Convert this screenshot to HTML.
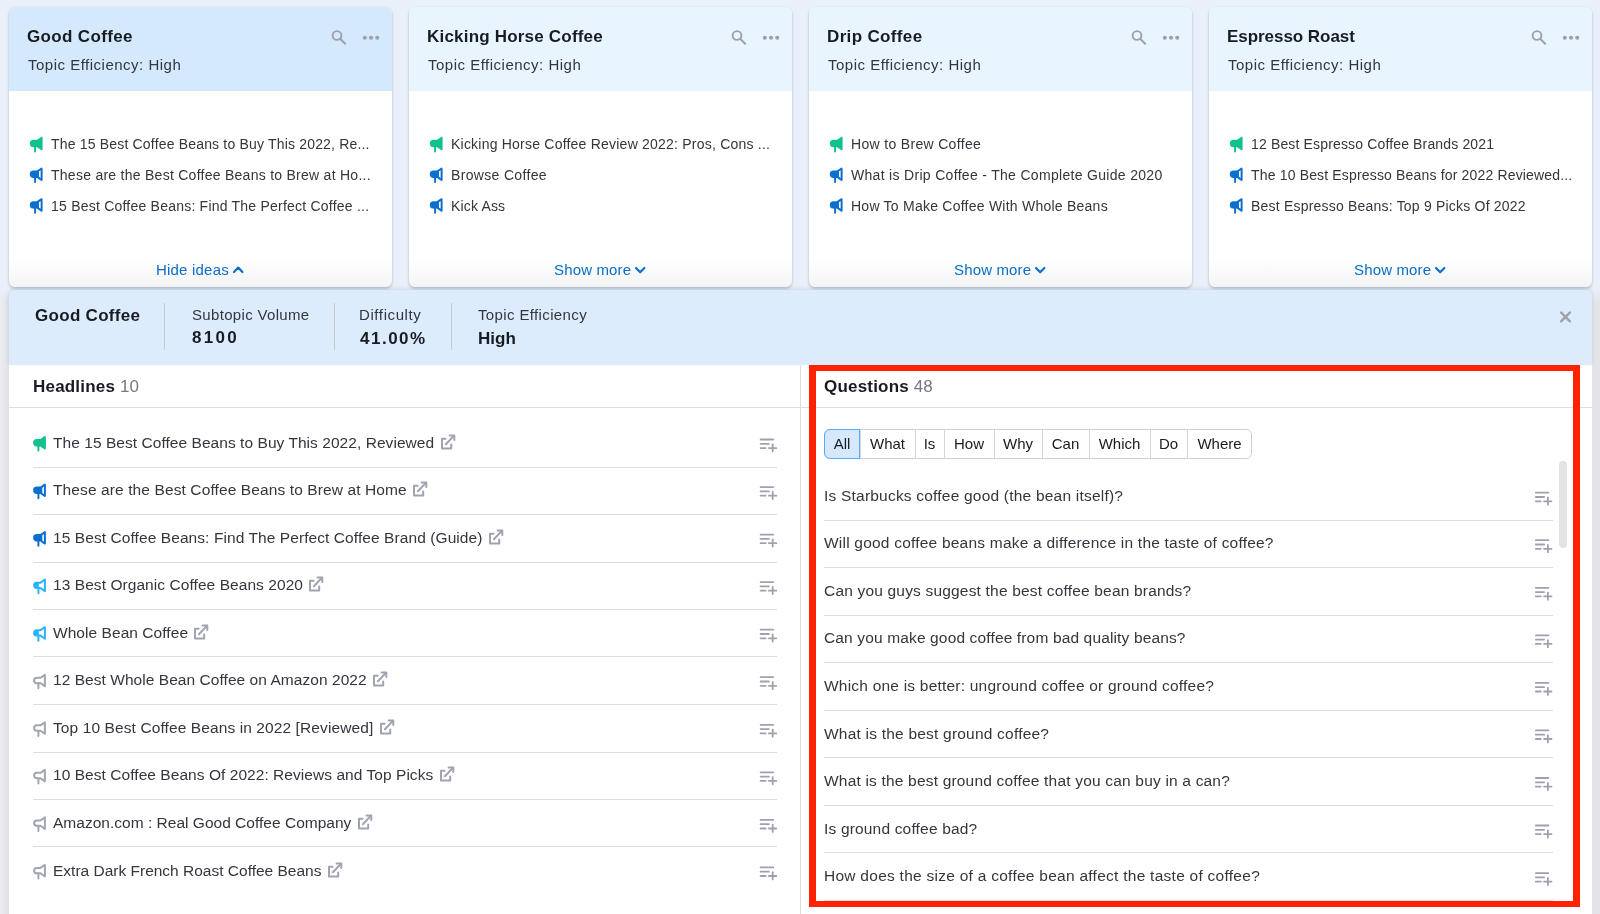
<!DOCTYPE html><html><head><meta charset="utf-8"><style>
html,body{margin:0;padding:0;}
body{width:1600px;height:914px;overflow:hidden;position:relative;background:linear-gradient(to right,#eceef2 0,#dfe1e6 9px,#e3e4e8 9px);font-family:'Liberation Sans', sans-serif;}
.t{position:absolute;white-space:nowrap;will-change:transform;}
.ic{position:absolute;overflow:visible;}
.abs{position:absolute;}
</style></head><body>
<div class="abs" style="left:0;top:0;width:1600px;height:302px;background:linear-gradient(#e9f0f9 0,#e9f0f9 289px,rgba(233,240,249,0) 302px)"></div>
<div class="abs" style="left:9.4px;top:7px;width:383px;height:280px;border-radius:6px;overflow:hidden;box-shadow:0 0 1px rgba(20,50,90,0.25),0 2px 3px rgba(20,50,90,0.22);background:linear-gradient(#fff 0,#fff 252px,#f4f4f4 280px)"><div style="height:83.6px;background:#d5e9fd"></div></div>
<div class="t" style="left:27.00px;top:27.51px;font-size:17px;line-height:17px;color:#191b23;font-weight:700;letter-spacing:0.35px;">Good Coffee</div>
<div class="t" style="left:27.80px;top:56.80px;font-size:15px;line-height:15px;color:#34363e;font-weight:400;letter-spacing:0.5px;">Topic Efficiency: High</div>
<svg class="ic" style="left:327px;top:25px" width="50" height="25" viewBox="0 0 50 25"><circle cx="10" cy="10.5" r="4.4" fill="none" stroke="#a09fab" stroke-width="1.9"/><path d="M13.2 13.8 L18.2 18.8" stroke="#a09fab" stroke-width="2" stroke-linecap="round"/><circle cx="37.85" cy="12.75" r="2.05" fill="#a09fab"/><circle cx="44" cy="12.75" r="2.05" fill="#a09fab"/><circle cx="50.25" cy="12.75" r="2.05" fill="#a09fab"/></svg>
<svg class="ic" style="left:24px;top:130px" width="24" height="24"><g transform="translate(0.70,0.60)"><path d="M12.5 10.2 L16.9 7.2 V18.7 L12.5 15.6 H8.8 A2.7 2.7 0 0 1 8.8 10.2 Z" fill="#13c08f" stroke="#13c08f" stroke-width="2" stroke-linejoin="round"/><path d="M10.4 15.8 V20.8" stroke="#13c08f" stroke-width="2" stroke-linecap="round"/></g></svg>
<div class="t" style="left:50.60px;top:137.45px;font-size:14px;line-height:14px;color:#34363e;font-weight:400;letter-spacing:0.181px;">The 15 Best Coffee Beans to Buy This 2022, Re...</div>
<svg class="ic" style="left:24px;top:161px" width="24" height="24"><g transform="translate(0.70,0.30)"><path d="M8.8 10.2 H12.5 L14.3 9 V16.9 L12.5 15.6 H8.8 A2.7 2.7 0 0 1 8.8 10.2Z" fill="#0b6fd0"/><path d="M12.5 10.2 L16.9 7.2 V18.7 L12.5 15.6 H8.8 A2.7 2.7 0 0 1 8.8 10.2 Z" fill="none" stroke="#0b6fd0" stroke-width="2" stroke-linejoin="round"/><path d="M10.4 15.8 V20.8" stroke="#0b6fd0" stroke-width="2" stroke-linecap="round"/></g></svg>
<div class="t" style="left:50.60px;top:168.15px;font-size:14px;line-height:14px;color:#34363e;font-weight:400;letter-spacing:0.265px;">These are the Best Coffee Beans to Brew at Ho...</div>
<svg class="ic" style="left:24px;top:192px" width="24" height="24"><g transform="translate(0.70,0.00)"><path d="M8.8 10.2 H12.5 L14.3 9 V16.9 L12.5 15.6 H8.8 A2.7 2.7 0 0 1 8.8 10.2Z" fill="#0b6fd0"/><path d="M12.5 10.2 L16.9 7.2 V18.7 L12.5 15.6 H8.8 A2.7 2.7 0 0 1 8.8 10.2 Z" fill="none" stroke="#0b6fd0" stroke-width="2" stroke-linejoin="round"/><path d="M10.4 15.8 V20.8" stroke="#0b6fd0" stroke-width="2" stroke-linecap="round"/></g></svg>
<div class="t" style="left:50.60px;top:198.85px;font-size:14px;line-height:14px;color:#34363e;font-weight:400;letter-spacing:0.222px;">15 Best Coffee Beans: Find The Perfect Coffee ...</div>
<div class="t" style="left:156.10px;top:262.05px;font-size:15px;line-height:15px;color:#0a6dca;font-weight:400;letter-spacing:0.2px;">Hide ideas</div>
<svg class="ic" style="left:231px;top:262px" width="14" height="14" viewBox="0 0 14 14"><path d="M3 10 L7.2 5.6 L11.4 10" fill="none" stroke="#0a6dca" stroke-width="2.2" stroke-linecap="round" stroke-linejoin="round"/></svg>
<div class="abs" style="left:409px;top:7px;width:383px;height:280px;border-radius:6px;overflow:hidden;box-shadow:0 0 1px rgba(20,50,90,0.25),0 2px 3px rgba(20,50,90,0.22);background:linear-gradient(#fff 0,#fff 252px,#f4f4f4 280px)"><div style="height:83.6px;background:#e8f5ff"></div></div>
<div class="t" style="left:427.00px;top:27.51px;font-size:17px;line-height:17px;color:#191b23;font-weight:700;letter-spacing:0.2px;">Kicking Horse Coffee</div>
<div class="t" style="left:427.80px;top:56.80px;font-size:15px;line-height:15px;color:#34363e;font-weight:400;letter-spacing:0.5px;">Topic Efficiency: High</div>
<svg class="ic" style="left:727px;top:25px" width="50" height="25" viewBox="0 0 50 25"><circle cx="10" cy="10.5" r="4.4" fill="none" stroke="#a09fab" stroke-width="1.9"/><path d="M13.2 13.8 L18.2 18.8" stroke="#a09fab" stroke-width="2" stroke-linecap="round"/><circle cx="37.85" cy="12.75" r="2.05" fill="#a09fab"/><circle cx="44" cy="12.75" r="2.05" fill="#a09fab"/><circle cx="50.25" cy="12.75" r="2.05" fill="#a09fab"/></svg>
<svg class="ic" style="left:424px;top:130px" width="24" height="24"><g transform="translate(0.70,0.60)"><path d="M12.5 10.2 L16.9 7.2 V18.7 L12.5 15.6 H8.8 A2.7 2.7 0 0 1 8.8 10.2 Z" fill="#13c08f" stroke="#13c08f" stroke-width="2" stroke-linejoin="round"/><path d="M10.4 15.8 V20.8" stroke="#13c08f" stroke-width="2" stroke-linecap="round"/></g></svg>
<div class="t" style="left:450.60px;top:137.45px;font-size:14px;line-height:14px;color:#34363e;font-weight:400;letter-spacing:0.219px;">Kicking Horse Coffee Review 2022: Pros, Cons ...</div>
<svg class="ic" style="left:424px;top:161px" width="24" height="24"><g transform="translate(0.70,0.30)"><path d="M8.8 10.2 H12.5 L14.3 9 V16.9 L12.5 15.6 H8.8 A2.7 2.7 0 0 1 8.8 10.2Z" fill="#0b6fd0"/><path d="M12.5 10.2 L16.9 7.2 V18.7 L12.5 15.6 H8.8 A2.7 2.7 0 0 1 8.8 10.2 Z" fill="none" stroke="#0b6fd0" stroke-width="2" stroke-linejoin="round"/><path d="M10.4 15.8 V20.8" stroke="#0b6fd0" stroke-width="2" stroke-linecap="round"/></g></svg>
<div class="t" style="left:450.60px;top:168.15px;font-size:14px;line-height:14px;color:#34363e;font-weight:400;letter-spacing:0.331px;">Browse Coffee</div>
<svg class="ic" style="left:424px;top:192px" width="24" height="24"><g transform="translate(0.70,0.00)"><path d="M8.8 10.2 H12.5 L14.3 9 V16.9 L12.5 15.6 H8.8 A2.7 2.7 0 0 1 8.8 10.2Z" fill="#0b6fd0"/><path d="M12.5 10.2 L16.9 7.2 V18.7 L12.5 15.6 H8.8 A2.7 2.7 0 0 1 8.8 10.2 Z" fill="none" stroke="#0b6fd0" stroke-width="2" stroke-linejoin="round"/><path d="M10.4 15.8 V20.8" stroke="#0b6fd0" stroke-width="2" stroke-linecap="round"/></g></svg>
<div class="t" style="left:450.60px;top:198.85px;font-size:14px;line-height:14px;color:#34363e;font-weight:400;letter-spacing:0.163px;">Kick Ass</div>
<div class="t" style="left:553.60px;top:262.30px;font-size:15px;line-height:15px;color:#0a6dca;font-weight:400;letter-spacing:0.15px;">Show more</div>
<svg class="ic" style="left:633px;top:262px" width="14" height="14" viewBox="0 0 14 14"><path d="M3 6 L7.2 10.2 L11.4 6" fill="none" stroke="#0a6dca" stroke-width="2.2" stroke-linecap="round" stroke-linejoin="round"/></svg>
<div class="abs" style="left:808.8px;top:7px;width:383px;height:280px;border-radius:6px;overflow:hidden;box-shadow:0 0 1px rgba(20,50,90,0.25),0 2px 3px rgba(20,50,90,0.22);background:linear-gradient(#fff 0,#fff 252px,#f4f4f4 280px)"><div style="height:83.6px;background:#e8f5ff"></div></div>
<div class="t" style="left:827.00px;top:27.51px;font-size:17px;line-height:17px;color:#191b23;font-weight:700;letter-spacing:0.35px;">Drip Coffee</div>
<div class="t" style="left:827.80px;top:56.80px;font-size:15px;line-height:15px;color:#34363e;font-weight:400;letter-spacing:0.5px;">Topic Efficiency: High</div>
<svg class="ic" style="left:1127px;top:25px" width="50" height="25" viewBox="0 0 50 25"><circle cx="10" cy="10.5" r="4.4" fill="none" stroke="#a09fab" stroke-width="1.9"/><path d="M13.2 13.8 L18.2 18.8" stroke="#a09fab" stroke-width="2" stroke-linecap="round"/><circle cx="37.85" cy="12.75" r="2.05" fill="#a09fab"/><circle cx="44" cy="12.75" r="2.05" fill="#a09fab"/><circle cx="50.25" cy="12.75" r="2.05" fill="#a09fab"/></svg>
<svg class="ic" style="left:824px;top:130px" width="24" height="24"><g transform="translate(0.70,0.60)"><path d="M12.5 10.2 L16.9 7.2 V18.7 L12.5 15.6 H8.8 A2.7 2.7 0 0 1 8.8 10.2 Z" fill="#13c08f" stroke="#13c08f" stroke-width="2" stroke-linejoin="round"/><path d="M10.4 15.8 V20.8" stroke="#13c08f" stroke-width="2" stroke-linecap="round"/></g></svg>
<div class="t" style="left:850.60px;top:137.45px;font-size:14px;line-height:14px;color:#34363e;font-weight:400;letter-spacing:0.328px;">How to Brew Coffee</div>
<svg class="ic" style="left:824px;top:161px" width="24" height="24"><g transform="translate(0.70,0.30)"><path d="M8.8 10.2 H12.5 L14.3 9 V16.9 L12.5 15.6 H8.8 A2.7 2.7 0 0 1 8.8 10.2Z" fill="#0b6fd0"/><path d="M12.5 10.2 L16.9 7.2 V18.7 L12.5 15.6 H8.8 A2.7 2.7 0 0 1 8.8 10.2 Z" fill="none" stroke="#0b6fd0" stroke-width="2" stroke-linejoin="round"/><path d="M10.4 15.8 V20.8" stroke="#0b6fd0" stroke-width="2" stroke-linecap="round"/></g></svg>
<div class="t" style="left:850.60px;top:168.15px;font-size:14px;line-height:14px;color:#34363e;font-weight:400;letter-spacing:0.311px;">What is Drip Coffee - The Complete Guide 2020</div>
<svg class="ic" style="left:824px;top:192px" width="24" height="24"><g transform="translate(0.70,0.00)"><path d="M8.8 10.2 H12.5 L14.3 9 V16.9 L12.5 15.6 H8.8 A2.7 2.7 0 0 1 8.8 10.2Z" fill="#0b6fd0"/><path d="M12.5 10.2 L16.9 7.2 V18.7 L12.5 15.6 H8.8 A2.7 2.7 0 0 1 8.8 10.2 Z" fill="none" stroke="#0b6fd0" stroke-width="2" stroke-linejoin="round"/><path d="M10.4 15.8 V20.8" stroke="#0b6fd0" stroke-width="2" stroke-linecap="round"/></g></svg>
<div class="t" style="left:850.60px;top:198.85px;font-size:14px;line-height:14px;color:#34363e;font-weight:400;letter-spacing:0.24px;">How To Make Coffee With Whole Beans</div>
<div class="t" style="left:953.60px;top:262.30px;font-size:15px;line-height:15px;color:#0a6dca;font-weight:400;letter-spacing:0.15px;">Show more</div>
<svg class="ic" style="left:1033px;top:262px" width="14" height="14" viewBox="0 0 14 14"><path d="M3 6 L7.2 10.2 L11.4 6" fill="none" stroke="#0a6dca" stroke-width="2.2" stroke-linecap="round" stroke-linejoin="round"/></svg>
<div class="abs" style="left:1208.7px;top:7px;width:383px;height:280px;border-radius:6px;overflow:hidden;box-shadow:0 0 1px rgba(20,50,90,0.25),0 2px 3px rgba(20,50,90,0.22);background:linear-gradient(#fff 0,#fff 252px,#f4f4f4 280px)"><div style="height:83.6px;background:#e8f5ff"></div></div>
<div class="t" style="left:1227.00px;top:27.51px;font-size:17px;line-height:17px;color:#191b23;font-weight:700;letter-spacing:-0.05px;">Espresso Roast</div>
<div class="t" style="left:1227.80px;top:56.80px;font-size:15px;line-height:15px;color:#34363e;font-weight:400;letter-spacing:0.5px;">Topic Efficiency: High</div>
<svg class="ic" style="left:1527px;top:25px" width="50" height="25" viewBox="0 0 50 25"><circle cx="10" cy="10.5" r="4.4" fill="none" stroke="#a09fab" stroke-width="1.9"/><path d="M13.2 13.8 L18.2 18.8" stroke="#a09fab" stroke-width="2" stroke-linecap="round"/><circle cx="37.85" cy="12.75" r="2.05" fill="#a09fab"/><circle cx="44" cy="12.75" r="2.05" fill="#a09fab"/><circle cx="50.25" cy="12.75" r="2.05" fill="#a09fab"/></svg>
<svg class="ic" style="left:1224px;top:130px" width="24" height="24"><g transform="translate(0.70,0.60)"><path d="M12.5 10.2 L16.9 7.2 V18.7 L12.5 15.6 H8.8 A2.7 2.7 0 0 1 8.8 10.2 Z" fill="#13c08f" stroke="#13c08f" stroke-width="2" stroke-linejoin="round"/><path d="M10.4 15.8 V20.8" stroke="#13c08f" stroke-width="2" stroke-linecap="round"/></g></svg>
<div class="t" style="left:1250.60px;top:137.45px;font-size:14px;line-height:14px;color:#34363e;font-weight:400;letter-spacing:0.151px;">12 Best Espresso Coffee Brands 2021</div>
<svg class="ic" style="left:1224px;top:161px" width="24" height="24"><g transform="translate(0.70,0.30)"><path d="M8.8 10.2 H12.5 L14.3 9 V16.9 L12.5 15.6 H8.8 A2.7 2.7 0 0 1 8.8 10.2Z" fill="#0b6fd0"/><path d="M12.5 10.2 L16.9 7.2 V18.7 L12.5 15.6 H8.8 A2.7 2.7 0 0 1 8.8 10.2 Z" fill="none" stroke="#0b6fd0" stroke-width="2" stroke-linejoin="round"/><path d="M10.4 15.8 V20.8" stroke="#0b6fd0" stroke-width="2" stroke-linecap="round"/></g></svg>
<div class="t" style="left:1250.60px;top:168.15px;font-size:14px;line-height:14px;color:#34363e;font-weight:400;letter-spacing:0.166px;">The 10 Best Espresso Beans for 2022 Reviewed...</div>
<svg class="ic" style="left:1224px;top:192px" width="24" height="24"><g transform="translate(0.70,0.00)"><path d="M8.8 10.2 H12.5 L14.3 9 V16.9 L12.5 15.6 H8.8 A2.7 2.7 0 0 1 8.8 10.2Z" fill="#0b6fd0"/><path d="M12.5 10.2 L16.9 7.2 V18.7 L12.5 15.6 H8.8 A2.7 2.7 0 0 1 8.8 10.2 Z" fill="none" stroke="#0b6fd0" stroke-width="2" stroke-linejoin="round"/><path d="M10.4 15.8 V20.8" stroke="#0b6fd0" stroke-width="2" stroke-linecap="round"/></g></svg>
<div class="t" style="left:1250.60px;top:198.85px;font-size:14px;line-height:14px;color:#34363e;font-weight:400;letter-spacing:0.203px;">Best Espresso Beans: Top 9 Picks Of 2022</div>
<div class="t" style="left:1353.60px;top:262.30px;font-size:15px;line-height:15px;color:#0a6dca;font-weight:400;letter-spacing:0.15px;">Show more</div>
<svg class="ic" style="left:1433px;top:262px" width="14" height="14" viewBox="0 0 14 14"><path d="M3 6 L7.2 10.2 L11.4 6" fill="none" stroke="#0a6dca" stroke-width="2.2" stroke-linecap="round" stroke-linejoin="round"/></svg>
<div class="abs" style="left:9px;top:290.4px;width:1583px;height:74.6px;background:#dcecfd;border-radius:6px 6px 0 0;box-shadow:0 -1px 4px rgba(20,40,80,0.12)"></div>
<div class="t" style="left:34.75px;top:307.11px;font-size:17px;line-height:17px;color:#191b23;font-weight:700;letter-spacing:0.3px;">Good Coffee</div>
<div class="abs" style="left:164px;top:303px;width:1px;height:47px;background:#c5c9d1"></div>
<div class="abs" style="left:334px;top:303px;width:1px;height:47px;background:#c5c9d1"></div>
<div class="abs" style="left:451px;top:303px;width:1px;height:47px;background:#c5c9d1"></div>
<div class="t" style="left:191.50px;top:307.10px;font-size:15px;line-height:15px;color:#34363e;font-weight:400;letter-spacing:0.33px;">Subtopic Volume</div>
<div class="t" style="left:191.50px;top:329.01px;font-size:17px;line-height:17px;color:#191b23;font-weight:700;letter-spacing:2.3px;">8100</div>
<div class="t" style="left:359.40px;top:307.30px;font-size:15px;line-height:15px;color:#34363e;font-weight:400;letter-spacing:0.6px;">Difficulty</div>
<div class="t" style="left:360.00px;top:329.61px;font-size:17px;line-height:17px;color:#191b23;font-weight:700;letter-spacing:1.5px;">41.00%</div>
<div class="t" style="left:478.00px;top:307.30px;font-size:15px;line-height:15px;color:#34363e;font-weight:400;letter-spacing:0.37px;">Topic Efficiency</div>
<div class="t" style="left:478.00px;top:329.61px;font-size:17px;line-height:17px;color:#191b23;font-weight:700;letter-spacing:0px;">High</div>
<svg class="ic" style="left:1558px;top:310px" width="15" height="15" viewBox="0 0 15 15"><path d="M3.1 2.5 L11.9 11.3 M11.9 2.5 L3.1 11.3" stroke="#a09fa8" stroke-width="2.4" stroke-linecap="round"/></svg>
<div class="abs" style="left:9px;top:365px;width:1583px;height:549px;background:#fff"></div>
<div class="abs" style="left:800px;top:365px;width:1px;height:549px;background:#dcdee4"></div>
<div class="abs" style="left:9px;top:407px;width:1583px;height:1px;background:#dcdee4"></div>
<div class="t" style="left:32.50px;top:378.36px;font-size:17px;line-height:17px;color:#191b23;font-weight:700;letter-spacing:0.2px;">Headlines <span style="font-weight:400;color:#757985;letter-spacing:0">10</span></div>
<div class="t" style="left:824.00px;top:378.36px;font-size:17px;line-height:17px;color:#191b23;font-weight:700;letter-spacing:0.2px;">Questions <span style="font-weight:400;color:#757985;letter-spacing:0">48</span></div>
<svg class="ic" style="left:28px;top:429px" width="24" height="24"><g transform="translate(0.00,0.80)"><path d="M12.5 10.2 L16.9 7.2 V18.7 L12.5 15.6 H8.8 A2.7 2.7 0 0 1 8.8 10.2 Z" fill="#13c08f" stroke="#13c08f" stroke-width="2" stroke-linejoin="round"/><path d="M10.4 15.8 V20.8" stroke="#13c08f" stroke-width="2" stroke-linecap="round"/></g></svg>
<div class="t" style="left:53.35px;top:434.58px;font-size:15.5px;line-height:15.5px;color:#34363e;font-weight:400;letter-spacing:0.051px;">The 15 Best Coffee Beans to Buy This 2022, Reviewed<svg style="position:absolute;top:-6.5px;margin-left:1.4px;overflow:visible" width="22" height="22" viewBox="0 0 22 22"><g stroke="#a0a3b0" stroke-width="2" fill="none" stroke-linecap="round" stroke-linejoin="round"><path d="M9.6 9.7 H6 V19.6 H15.2 V15.6"/><path d="M9.9 15.2 L17.8 6.9"/><path d="M13.6 6.4 H18.3 V11.1"/></g></svg></div>
<svg class="ic" style="left:758px;top:434px" width="19" height="18"><g stroke="#9fa2ae" stroke-width="1.8" stroke-linecap="round" transform="translate(0.70,0.50)"><path d="M1.9 5 H14.5"/><path d="M1.9 9.3 H10.2"/><path d="M1.9 13.6 H6.9"/><path d="M10.2 13.6 H17.6"/><path d="M14 9.8 V17"/></g></svg>
<div class="abs" style="left:33px;top:467px;width:744px;height:1px;background:#dcdee4"></div>
<svg class="ic" style="left:28px;top:477px" width="24" height="24"><g transform="translate(0.00,0.35)"><path d="M8.8 10.2 H12.5 L14.3 9 V16.9 L12.5 15.6 H8.8 A2.7 2.7 0 0 1 8.8 10.2Z" fill="#0b6fd0"/><path d="M12.5 10.2 L16.9 7.2 V18.7 L12.5 15.6 H8.8 A2.7 2.7 0 0 1 8.8 10.2 Z" fill="none" stroke="#0b6fd0" stroke-width="2" stroke-linejoin="round"/><path d="M10.4 15.8 V20.8" stroke="#0b6fd0" stroke-width="2" stroke-linecap="round"/></g></svg>
<div class="t" style="left:53.35px;top:482.13px;font-size:15.5px;line-height:15.5px;color:#34363e;font-weight:400;letter-spacing:0.11px;">These are the Best Coffee Beans to Brew at Home<svg style="position:absolute;top:-6.5px;margin-left:1.4px;overflow:visible" width="22" height="22" viewBox="0 0 22 22"><g stroke="#a0a3b0" stroke-width="2" fill="none" stroke-linecap="round" stroke-linejoin="round"><path d="M9.6 9.7 H6 V19.6 H15.2 V15.6"/><path d="M9.9 15.2 L17.8 6.9"/><path d="M13.6 6.4 H18.3 V11.1"/></g></svg></div>
<svg class="ic" style="left:758px;top:482px" width="19" height="18"><g stroke="#9fa2ae" stroke-width="1.8" stroke-linecap="round" transform="translate(0.70,0.10)"><path d="M1.9 5 H14.5"/><path d="M1.9 9.3 H10.2"/><path d="M1.9 13.6 H6.9"/><path d="M10.2 13.6 H17.6"/><path d="M14 9.8 V17"/></g></svg>
<div class="abs" style="left:33px;top:514px;width:744px;height:1px;background:#dcdee4"></div>
<svg class="ic" style="left:28px;top:524px" width="24" height="24"><g transform="translate(0.00,0.90)"><path d="M8.8 10.2 H12.5 L14.3 9 V16.9 L12.5 15.6 H8.8 A2.7 2.7 0 0 1 8.8 10.2Z" fill="#0b6fd0"/><path d="M12.5 10.2 L16.9 7.2 V18.7 L12.5 15.6 H8.8 A2.7 2.7 0 0 1 8.8 10.2 Z" fill="none" stroke="#0b6fd0" stroke-width="2" stroke-linejoin="round"/><path d="M10.4 15.8 V20.8" stroke="#0b6fd0" stroke-width="2" stroke-linecap="round"/></g></svg>
<div class="t" style="left:53.35px;top:529.68px;font-size:15.5px;line-height:15.5px;color:#34363e;font-weight:400;letter-spacing:0.08px;">15 Best Coffee Beans: Find The Perfect Coffee Brand (Guide)<svg style="position:absolute;top:-6.5px;margin-left:1.4px;overflow:visible" width="22" height="22" viewBox="0 0 22 22"><g stroke="#a0a3b0" stroke-width="2" fill="none" stroke-linecap="round" stroke-linejoin="round"><path d="M9.6 9.7 H6 V19.6 H15.2 V15.6"/><path d="M9.9 15.2 L17.8 6.9"/><path d="M13.6 6.4 H18.3 V11.1"/></g></svg></div>
<svg class="ic" style="left:758px;top:529px" width="19" height="18"><g stroke="#9fa2ae" stroke-width="1.8" stroke-linecap="round" transform="translate(0.70,0.60)"><path d="M1.9 5 H14.5"/><path d="M1.9 9.3 H10.2"/><path d="M1.9 13.6 H6.9"/><path d="M10.2 13.6 H17.6"/><path d="M14 9.8 V17"/></g></svg>
<div class="abs" style="left:33px;top:562px;width:744px;height:1px;background:#dcdee4"></div>
<svg class="ic" style="left:28px;top:572px" width="24" height="24"><g transform="translate(0.00,0.45)"><path d="M8.8 10.2 H10.9 V15.6 H8.8 A2.7 2.7 0 0 1 8.8 10.2Z" fill="#2bb3ff"/><path d="M12.5 10.2 L16.9 7.2 V18.7 L12.5 15.6 H8.8 A2.7 2.7 0 0 1 8.8 10.2 Z" fill="none" stroke="#2bb3ff" stroke-width="2" stroke-linejoin="round"/><path d="M10.4 15.8 V20.8" stroke="#2bb3ff" stroke-width="2" stroke-linecap="round"/></g></svg>
<div class="t" style="left:53.35px;top:577.23px;font-size:15.5px;line-height:15.5px;color:#34363e;font-weight:400;letter-spacing:0.065px;">13 Best Organic Coffee Beans 2020<svg style="position:absolute;top:-6.5px;margin-left:1.4px;overflow:visible" width="22" height="22" viewBox="0 0 22 22"><g stroke="#a0a3b0" stroke-width="2" fill="none" stroke-linecap="round" stroke-linejoin="round"><path d="M9.6 9.7 H6 V19.6 H15.2 V15.6"/><path d="M9.9 15.2 L17.8 6.9"/><path d="M13.6 6.4 H18.3 V11.1"/></g></svg></div>
<svg class="ic" style="left:758px;top:577px" width="19" height="18"><g stroke="#9fa2ae" stroke-width="1.8" stroke-linecap="round" transform="translate(0.70,0.10)"><path d="M1.9 5 H14.5"/><path d="M1.9 9.3 H10.2"/><path d="M1.9 13.6 H6.9"/><path d="M10.2 13.6 H17.6"/><path d="M14 9.8 V17"/></g></svg>
<div class="abs" style="left:33px;top:609px;width:744px;height:1px;background:#dcdee4"></div>
<svg class="ic" style="left:28px;top:620px" width="24" height="24"><g transform="translate(0.00,0.00)"><path d="M8.8 10.2 H10.9 V15.6 H8.8 A2.7 2.7 0 0 1 8.8 10.2Z" fill="#2bb3ff"/><path d="M12.5 10.2 L16.9 7.2 V18.7 L12.5 15.6 H8.8 A2.7 2.7 0 0 1 8.8 10.2 Z" fill="none" stroke="#2bb3ff" stroke-width="2" stroke-linejoin="round"/><path d="M10.4 15.8 V20.8" stroke="#2bb3ff" stroke-width="2" stroke-linecap="round"/></g></svg>
<div class="t" style="left:53.35px;top:624.78px;font-size:15.5px;line-height:15.5px;color:#34363e;font-weight:400;letter-spacing:0.056px;">Whole Bean Coffee<svg style="position:absolute;top:-6.5px;margin-left:1.4px;overflow:visible" width="22" height="22" viewBox="0 0 22 22"><g stroke="#a0a3b0" stroke-width="2" fill="none" stroke-linecap="round" stroke-linejoin="round"><path d="M9.6 9.7 H6 V19.6 H15.2 V15.6"/><path d="M9.9 15.2 L17.8 6.9"/><path d="M13.6 6.4 H18.3 V11.1"/></g></svg></div>
<svg class="ic" style="left:758px;top:624px" width="19" height="18"><g stroke="#9fa2ae" stroke-width="1.8" stroke-linecap="round" transform="translate(0.70,0.70)"><path d="M1.9 5 H14.5"/><path d="M1.9 9.3 H10.2"/><path d="M1.9 13.6 H6.9"/><path d="M10.2 13.6 H17.6"/><path d="M14 9.8 V17"/></g></svg>
<div class="abs" style="left:33px;top:656px;width:744px;height:1px;background:#dcdee4"></div>
<svg class="ic" style="left:28px;top:667px" width="24" height="24"><g transform="translate(0.00,0.55)"><path d="M12.5 10.2 L16.9 7.2 V18.7 L12.5 15.6 H8.8 A2.7 2.7 0 0 1 8.8 10.2 Z" fill="none" stroke="#a2a5b2" stroke-width="2" stroke-linejoin="round"/><path d="M10.4 15.8 V20.8" stroke="#a2a5b2" stroke-width="2" stroke-linecap="round"/></g></svg>
<div class="t" style="left:53.35px;top:672.33px;font-size:15.5px;line-height:15.5px;color:#34363e;font-weight:400;letter-spacing:0.05px;">12 Best Whole Bean Coffee on Amazon 2022<svg style="position:absolute;top:-6.5px;margin-left:1.4px;overflow:visible" width="22" height="22" viewBox="0 0 22 22"><g stroke="#a0a3b0" stroke-width="2" fill="none" stroke-linecap="round" stroke-linejoin="round"><path d="M9.6 9.7 H6 V19.6 H15.2 V15.6"/><path d="M9.9 15.2 L17.8 6.9"/><path d="M13.6 6.4 H18.3 V11.1"/></g></svg></div>
<svg class="ic" style="left:758px;top:672px" width="19" height="18"><g stroke="#9fa2ae" stroke-width="1.8" stroke-linecap="round" transform="translate(0.70,0.20)"><path d="M1.9 5 H14.5"/><path d="M1.9 9.3 H10.2"/><path d="M1.9 13.6 H6.9"/><path d="M10.2 13.6 H17.6"/><path d="M14 9.8 V17"/></g></svg>
<div class="abs" style="left:33px;top:704px;width:744px;height:1px;background:#dcdee4"></div>
<svg class="ic" style="left:28px;top:715px" width="24" height="24"><g transform="translate(0.00,0.10)"><path d="M12.5 10.2 L16.9 7.2 V18.7 L12.5 15.6 H8.8 A2.7 2.7 0 0 1 8.8 10.2 Z" fill="none" stroke="#a2a5b2" stroke-width="2" stroke-linejoin="round"/><path d="M10.4 15.8 V20.8" stroke="#a2a5b2" stroke-width="2" stroke-linecap="round"/></g></svg>
<div class="t" style="left:53.35px;top:719.88px;font-size:15.5px;line-height:15.5px;color:#34363e;font-weight:400;letter-spacing:0.101px;">Top 10 Best Coffee Beans in 2022 [Reviewed]<svg style="position:absolute;top:-6.5px;margin-left:1.4px;overflow:visible" width="22" height="22" viewBox="0 0 22 22"><g stroke="#a0a3b0" stroke-width="2" fill="none" stroke-linecap="round" stroke-linejoin="round"><path d="M9.6 9.7 H6 V19.6 H15.2 V15.6"/><path d="M9.9 15.2 L17.8 6.9"/><path d="M13.6 6.4 H18.3 V11.1"/></g></svg></div>
<svg class="ic" style="left:758px;top:719px" width="19" height="18"><g stroke="#9fa2ae" stroke-width="1.8" stroke-linecap="round" transform="translate(0.70,0.80)"><path d="M1.9 5 H14.5"/><path d="M1.9 9.3 H10.2"/><path d="M1.9 13.6 H6.9"/><path d="M10.2 13.6 H17.6"/><path d="M14 9.8 V17"/></g></svg>
<div class="abs" style="left:33px;top:752px;width:744px;height:1px;background:#dcdee4"></div>
<svg class="ic" style="left:28px;top:762px" width="24" height="24"><g transform="translate(0.00,0.65)"><path d="M12.5 10.2 L16.9 7.2 V18.7 L12.5 15.6 H8.8 A2.7 2.7 0 0 1 8.8 10.2 Z" fill="none" stroke="#a2a5b2" stroke-width="2" stroke-linejoin="round"/><path d="M10.4 15.8 V20.8" stroke="#a2a5b2" stroke-width="2" stroke-linecap="round"/></g></svg>
<div class="t" style="left:53.35px;top:767.43px;font-size:15.5px;line-height:15.5px;color:#34363e;font-weight:400;letter-spacing:0.051px;">10 Best Coffee Beans Of 2022: Reviews and Top Picks<svg style="position:absolute;top:-6.5px;margin-left:1.4px;overflow:visible" width="22" height="22" viewBox="0 0 22 22"><g stroke="#a0a3b0" stroke-width="2" fill="none" stroke-linecap="round" stroke-linejoin="round"><path d="M9.6 9.7 H6 V19.6 H15.2 V15.6"/><path d="M9.9 15.2 L17.8 6.9"/><path d="M13.6 6.4 H18.3 V11.1"/></g></svg></div>
<svg class="ic" style="left:758px;top:767px" width="19" height="18"><g stroke="#9fa2ae" stroke-width="1.8" stroke-linecap="round" transform="translate(0.70,0.30)"><path d="M1.9 5 H14.5"/><path d="M1.9 9.3 H10.2"/><path d="M1.9 13.6 H6.9"/><path d="M10.2 13.6 H17.6"/><path d="M14 9.8 V17"/></g></svg>
<div class="abs" style="left:33px;top:799px;width:744px;height:1px;background:#dcdee4"></div>
<svg class="ic" style="left:28px;top:810px" width="24" height="24"><g transform="translate(0.00,0.20)"><path d="M12.5 10.2 L16.9 7.2 V18.7 L12.5 15.6 H8.8 A2.7 2.7 0 0 1 8.8 10.2 Z" fill="none" stroke="#a2a5b2" stroke-width="2" stroke-linejoin="round"/><path d="M10.4 15.8 V20.8" stroke="#a2a5b2" stroke-width="2" stroke-linecap="round"/></g></svg>
<div class="t" style="left:53.35px;top:814.98px;font-size:15.5px;line-height:15.5px;color:#34363e;font-weight:400;letter-spacing:0.015px;">Amazon.com : Real Good Coffee Company<svg style="position:absolute;top:-6.5px;margin-left:1.4px;overflow:visible" width="22" height="22" viewBox="0 0 22 22"><g stroke="#a0a3b0" stroke-width="2" fill="none" stroke-linecap="round" stroke-linejoin="round"><path d="M9.6 9.7 H6 V19.6 H15.2 V15.6"/><path d="M9.9 15.2 L17.8 6.9"/><path d="M13.6 6.4 H18.3 V11.1"/></g></svg></div>
<svg class="ic" style="left:758px;top:814px" width="19" height="18"><g stroke="#9fa2ae" stroke-width="1.8" stroke-linecap="round" transform="translate(0.70,0.90)"><path d="M1.9 5 H14.5"/><path d="M1.9 9.3 H10.2"/><path d="M1.9 13.6 H6.9"/><path d="M10.2 13.6 H17.6"/><path d="M14 9.8 V17"/></g></svg>
<div class="abs" style="left:33px;top:846px;width:744px;height:1px;background:#dcdee4"></div>
<svg class="ic" style="left:28px;top:857px" width="24" height="24"><g transform="translate(0.00,0.75)"><path d="M12.5 10.2 L16.9 7.2 V18.7 L12.5 15.6 H8.8 A2.7 2.7 0 0 1 8.8 10.2 Z" fill="none" stroke="#a2a5b2" stroke-width="2" stroke-linejoin="round"/><path d="M10.4 15.8 V20.8" stroke="#a2a5b2" stroke-width="2" stroke-linecap="round"/></g></svg>
<div class="t" style="left:53.35px;top:862.53px;font-size:15.5px;line-height:15.5px;color:#34363e;font-weight:400;letter-spacing:-0.001px;">Extra Dark French Roast Coffee Beans<svg style="position:absolute;top:-6.5px;margin-left:1.4px;overflow:visible" width="22" height="22" viewBox="0 0 22 22"><g stroke="#a0a3b0" stroke-width="2" fill="none" stroke-linecap="round" stroke-linejoin="round"><path d="M9.6 9.7 H6 V19.6 H15.2 V15.6"/><path d="M9.9 15.2 L17.8 6.9"/><path d="M13.6 6.4 H18.3 V11.1"/></g></svg></div>
<svg class="ic" style="left:758px;top:862px" width="19" height="18"><g stroke="#9fa2ae" stroke-width="1.8" stroke-linecap="round" transform="translate(0.70,0.40)"><path d="M1.9 5 H14.5"/><path d="M1.9 9.3 H10.2"/><path d="M1.9 13.6 H6.9"/><path d="M10.2 13.6 H17.6"/><path d="M14 9.8 V17"/></g></svg>
<div class="t" style="left:823.80px;top:487.78px;font-size:15.5px;line-height:15.5px;color:#34363e;font-weight:400;letter-spacing:0.21px;">Is Starbucks coffee good (the bean itself)?</div>
<svg class="ic" style="left:1533px;top:487px" width="19" height="18"><g stroke="#9fa2ae" stroke-width="1.8" stroke-linecap="round" transform="translate(0.90,0.70)"><path d="M1.9 5 H14.5"/><path d="M1.9 9.3 H10.2"/><path d="M1.9 13.6 H6.9"/><path d="M10.2 13.6 H17.6"/><path d="M14 9.8 V17"/></g></svg>
<div class="abs" style="left:824px;top:520px;width:729px;height:1px;background:#dcdee4"></div>
<div class="t" style="left:823.80px;top:535.33px;font-size:15.5px;line-height:15.5px;color:#34363e;font-weight:400;letter-spacing:0.214px;">Will good coffee beans make a difference in the taste of coffee?</div>
<svg class="ic" style="left:1533px;top:535px" width="19" height="18"><g stroke="#9fa2ae" stroke-width="1.8" stroke-linecap="round" transform="translate(0.90,0.20)"><path d="M1.9 5 H14.5"/><path d="M1.9 9.3 H10.2"/><path d="M1.9 13.6 H6.9"/><path d="M10.2 13.6 H17.6"/><path d="M14 9.8 V17"/></g></svg>
<div class="abs" style="left:824px;top:567px;width:729px;height:1px;background:#dcdee4"></div>
<div class="t" style="left:823.80px;top:582.88px;font-size:15.5px;line-height:15.5px;color:#34363e;font-weight:400;letter-spacing:0.186px;">Can you guys suggest the best coffee bean brands?</div>
<svg class="ic" style="left:1533px;top:582px" width="19" height="18"><g stroke="#9fa2ae" stroke-width="1.8" stroke-linecap="round" transform="translate(0.90,0.80)"><path d="M1.9 5 H14.5"/><path d="M1.9 9.3 H10.2"/><path d="M1.9 13.6 H6.9"/><path d="M10.2 13.6 H17.6"/><path d="M14 9.8 V17"/></g></svg>
<div class="abs" style="left:824px;top:615px;width:729px;height:1px;background:#dcdee4"></div>
<div class="t" style="left:823.80px;top:630.43px;font-size:15.5px;line-height:15.5px;color:#34363e;font-weight:400;letter-spacing:0.143px;">Can you make good coffee from bad quality beans?</div>
<svg class="ic" style="left:1533px;top:630px" width="19" height="18"><g stroke="#9fa2ae" stroke-width="1.8" stroke-linecap="round" transform="translate(0.90,0.30)"><path d="M1.9 5 H14.5"/><path d="M1.9 9.3 H10.2"/><path d="M1.9 13.6 H6.9"/><path d="M10.2 13.6 H17.6"/><path d="M14 9.8 V17"/></g></svg>
<div class="abs" style="left:824px;top:662px;width:729px;height:1px;background:#dcdee4"></div>
<div class="t" style="left:823.80px;top:677.98px;font-size:15.5px;line-height:15.5px;color:#34363e;font-weight:400;letter-spacing:0.213px;">Which one is better: unground coffee or ground coffee?</div>
<svg class="ic" style="left:1533px;top:677px" width="19" height="18"><g stroke="#9fa2ae" stroke-width="1.8" stroke-linecap="round" transform="translate(0.90,0.90)"><path d="M1.9 5 H14.5"/><path d="M1.9 9.3 H10.2"/><path d="M1.9 13.6 H6.9"/><path d="M10.2 13.6 H17.6"/><path d="M14 9.8 V17"/></g></svg>
<div class="abs" style="left:824px;top:710px;width:729px;height:1px;background:#dcdee4"></div>
<div class="t" style="left:823.80px;top:725.53px;font-size:15.5px;line-height:15.5px;color:#34363e;font-weight:400;letter-spacing:0.212px;">What is the best ground coffee?</div>
<svg class="ic" style="left:1533px;top:725px" width="19" height="18"><g stroke="#9fa2ae" stroke-width="1.8" stroke-linecap="round" transform="translate(0.90,0.40)"><path d="M1.9 5 H14.5"/><path d="M1.9 9.3 H10.2"/><path d="M1.9 13.6 H6.9"/><path d="M10.2 13.6 H17.6"/><path d="M14 9.8 V17"/></g></svg>
<div class="abs" style="left:824px;top:757px;width:729px;height:1px;background:#dcdee4"></div>
<div class="t" style="left:823.80px;top:773.08px;font-size:15.5px;line-height:15.5px;color:#34363e;font-weight:400;letter-spacing:0.189px;">What is the best ground coffee that you can buy in a can?</div>
<svg class="ic" style="left:1533px;top:773px" width="19" height="18"><g stroke="#9fa2ae" stroke-width="1.8" stroke-linecap="round" transform="translate(0.90,0.00)"><path d="M1.9 5 H14.5"/><path d="M1.9 9.3 H10.2"/><path d="M1.9 13.6 H6.9"/><path d="M10.2 13.6 H17.6"/><path d="M14 9.8 V17"/></g></svg>
<div class="abs" style="left:824px;top:805px;width:729px;height:1px;background:#dcdee4"></div>
<div class="t" style="left:823.80px;top:820.63px;font-size:15.5px;line-height:15.5px;color:#34363e;font-weight:400;letter-spacing:0.176px;">Is ground coffee bad?</div>
<svg class="ic" style="left:1533px;top:820px" width="19" height="18"><g stroke="#9fa2ae" stroke-width="1.8" stroke-linecap="round" transform="translate(0.90,0.50)"><path d="M1.9 5 H14.5"/><path d="M1.9 9.3 H10.2"/><path d="M1.9 13.6 H6.9"/><path d="M10.2 13.6 H17.6"/><path d="M14 9.8 V17"/></g></svg>
<div class="abs" style="left:824px;top:852px;width:729px;height:1px;background:#dcdee4"></div>
<div class="t" style="left:823.80px;top:868.18px;font-size:15.5px;line-height:15.5px;color:#34363e;font-weight:400;letter-spacing:0.264px;">How does the size of a coffee bean affect the taste of coffee?</div>
<svg class="ic" style="left:1533px;top:868px" width="19" height="18"><g stroke="#9fa2ae" stroke-width="1.8" stroke-linecap="round" transform="translate(0.90,0.10)"><path d="M1.9 5 H14.5"/><path d="M1.9 9.3 H10.2"/><path d="M1.9 13.6 H6.9"/><path d="M10.2 13.6 H17.6"/><path d="M14 9.8 V17"/></g></svg>
<div class="abs" style="left:824px;top:900px;width:729px;height:1px;background:#dcdee4"></div>
<div class="abs" style="left:824px;top:429px;width:426px;height:28px;border:1px solid #cdd0d8;border-radius:6px;background:#fff"></div>
<div class="t" style="left:824px;top:436.20px;width:36px;text-align:center;font-size:15px;line-height:15px;color:#191b23">All</div>
<div class="abs" style="left:860px;top:430px;width:1px;height:28px;background:#d3d6dd"></div>
<div class="t" style="left:860px;top:436.20px;width:55px;text-align:center;font-size:15px;line-height:15px;color:#191b23">What</div>
<div class="abs" style="left:915px;top:430px;width:1px;height:28px;background:#d3d6dd"></div>
<div class="t" style="left:915px;top:436.20px;width:29px;text-align:center;font-size:15px;line-height:15px;color:#191b23">Is</div>
<div class="abs" style="left:944px;top:430px;width:1px;height:28px;background:#d3d6dd"></div>
<div class="t" style="left:944px;top:436.20px;width:50px;text-align:center;font-size:15px;line-height:15px;color:#191b23">How</div>
<div class="abs" style="left:994px;top:430px;width:1px;height:28px;background:#d3d6dd"></div>
<div class="t" style="left:994px;top:436.20px;width:48px;text-align:center;font-size:15px;line-height:15px;color:#191b23">Why</div>
<div class="abs" style="left:1042px;top:430px;width:1px;height:28px;background:#d3d6dd"></div>
<div class="t" style="left:1042px;top:436.20px;width:47px;text-align:center;font-size:15px;line-height:15px;color:#191b23">Can</div>
<div class="abs" style="left:1089px;top:430px;width:1px;height:28px;background:#d3d6dd"></div>
<div class="t" style="left:1089px;top:436.20px;width:61px;text-align:center;font-size:15px;line-height:15px;color:#191b23">Which</div>
<div class="abs" style="left:1150px;top:430px;width:1px;height:28px;background:#d3d6dd"></div>
<div class="t" style="left:1150px;top:436.20px;width:37px;text-align:center;font-size:15px;line-height:15px;color:#191b23">Do</div>
<div class="abs" style="left:1187px;top:430px;width:1px;height:28px;background:#d3d6dd"></div>
<div class="t" style="left:1187px;top:436.20px;width:65px;text-align:center;font-size:15px;line-height:15px;color:#191b23">Where</div>
<div class="abs" style="left:824px;top:429px;width:34px;height:28px;border:1px solid #5aa9f5;border-radius:6px 0 0 6px;background:#d6e8fc"></div>
<div class="t" style="left:824px;top:436.20px;width:36px;text-align:center;font-size:15px;line-height:15px;color:#191b23">All</div>
<div class="abs" style="left:1559px;top:461px;width:8px;height:87px;border-radius:4px;background:#e3e3e5"></div>
<div class="abs" style="left:809px;top:365px;width:757px;height:530px;border:solid #ff2200;border-width:6px 7px 6px 7px"></div>
</body></html>
